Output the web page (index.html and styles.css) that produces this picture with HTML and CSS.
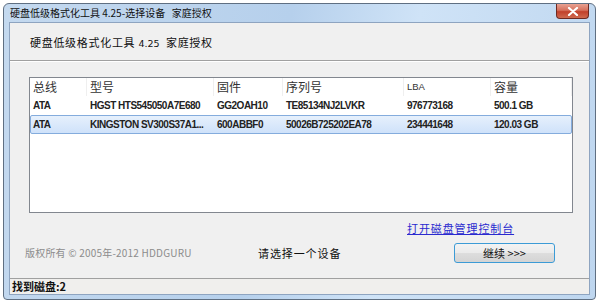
FILE: index.html
```html
<!DOCTYPE html>
<html lang="zh-CN">
<head>
    <meta charset="UTF-8">
    <title>硬盘低级格式化工具 4.25-选择设备</title>
    <link rel="stylesheet" href="styles.css">
</head>
<body>
    <div class="window">
        <div class="titlebar">
            <span class="title">硬盘低级格式化工具 4.25-选择设备 &nbsp; 家庭授权</span>
            <button class="close-btn">
                <svg width="12" height="9" viewBox="0 0 12 9">
                    <path d="M2 1 L10 8 M10 1 L2 8" stroke="#fff" stroke-width="2.2" stroke-linecap="round"/>
                </svg>
            </button>
        </div>
        <div class="client">
            <header class="app-header">
                <h1>硬盘低级格式化工具 <span class="ver">4.25</span> &nbsp;家庭授权</h1>
            </header>
            <main class="content">
                <div class="listbox">
                    <div class="list-head">
                        <div>总线</div>
                        <div>型号</div>
                        <div>固件</div>
                        <div>序列号</div>
                        <div class="lba">LBA</div>
                        <div>容量</div>
                    </div>
                    <div class="list-row">
                        <div>ATA</div>
                        <div>HGST HTS545050A7E680</div>
                        <div>GG2OAH10</div>
                        <div>TE85134NJ2LVKR</div>
                        <div>976773168</div>
                        <div>500.1 GB</div>
                    </div>
                    <div class="list-row selected">
                        <div>ATA</div>
                        <div>KINGSTON SV300S37A1...</div>
                        <div>600ABBF0</div>
                        <div>50026B725202EA78</div>
                        <div>234441648</div>
                        <div>120.03 GB</div>
                    </div>
                </div>
                <div class="link-row">
                    <a href="#" class="console-link">打开磁盘管理控制台</a>
                </div>
                <div class="bottom-row">
                    <span class="copyright">版权所有 © 2005年-2012 HDDGURU</span>
                    <span class="hint">请选择一个设备</span>
                    <button class="continue-btn">继续 &gt;&gt;&gt;</button>
                </div>
            </main>
            <footer class="statusbar">找到磁盘:2</footer>
        </div>
    </div>
</body>
</html>
```
FILE: styles.css
```css
body {
    margin: 0;
    padding: 3px 4px 4px 3px;
    background-color: #fff;
    font-family: "Noto Sans CJK SC", "DejaVu Sans", sans-serif;
}
.window {
    height: 297px;
    box-sizing: border-box;
    border: 1px solid #5f6f82;
    border-radius: 6px 6px 4px 4px;
    background: linear-gradient(100deg, #c4d9ef 0%, #b6d0ec 45%, #cfe3f7 65%, #bed6ef 100%);
    padding: 0 5px 4px 5px;
    display: flex;
    flex-direction: column;
}
.titlebar {
    height: 18px;
    display: flex;
    align-items: flex-start;
    justify-content: space-between;
}
.title {
    font-size: 10px;
    line-height: 18px;
    color: #111;
    padding-left: 1px;
}
.close-btn {
    width: 33px;
    height: 15px;
    margin-right: 1px;
    padding: 0;
    border: 1px solid #6d2a22;
    border-top: none;
    border-radius: 0 0 4px 4px;
    background: linear-gradient(#e8a192 0%, #d5705c 45%, #c1402b 55%, #cf6a4f 100%);
    display: flex;
    align-items: center;
    justify-content: center;
}
.client {
    flex: 1;
    border: 1px solid #8ea4c0;
    background-color: #f0f0f0;
    display: flex;
    flex-direction: column;
}
.app-header {
    height: 37px;
    border-bottom: 1px solid #a0a0a0;
    box-shadow: 0 1px 0 #fff;
    display: flex;
    align-items: center;
    padding-left: 20px;
}
.app-header h1 {
    margin: 0;
    font-size: 11px;
    font-weight: normal;
    letter-spacing: 0.7px;
    color: #111;
}
.ver {
    font-family: "DejaVu Sans", sans-serif;
    font-size: 9.5px;
    letter-spacing: 0;
}
.content {
    flex: 1;
    padding: 16px 16px 0 19px;
}
.listbox {
    width: 544px;
    height: 136px;
    box-sizing: border-box;
    border: 1px solid #82878f;
    background-color: #fff;
}
.list-head, .list-row {
    display: grid;
    grid-template-columns: 57px 127px 69px 121px 87px 1fr;
}
.list-head {
    height: 18px;
    align-items: center;
    font-size: 12px;
    color: #333;
}
.list-head div {
    padding-left: 3px;
    border-right: 1px solid #efefef;
    line-height: 18px;
}
.list-head .lba {
    font-family: "Liberation Sans", sans-serif;
    font-size: 9.5px;
}
.list-row {
    height: 17px;
    align-items: center;
    font-family: "Liberation Sans", sans-serif;
    font-size: 10px;
    font-weight: bold;
    letter-spacing: -0.5px;
    color: #222;
    border: 1px solid transparent;
}
.list-row div {
    padding-left: 2px;
    white-space: nowrap;
    overflow: hidden;
}
.list-row.selected {
    background: linear-gradient(#e6f0fc, #cfe2fa);
    border-color: #84acdd;
    border-radius: 2px;
}
.link-row {
    height: 29px;
    display: flex;
    align-items: center;
    padding-left: 378px;
}
.console-link {
    font-size: 11px;
    letter-spacing: 0.9px;
    color: #2a2acf;
}
.bottom-row {
    display: flex;
    align-items: center;
    height: 21px;
    margin-left: -4px;
}
.copyright {
    width: 233px;
    font-size: 10px;
    letter-spacing: 0.2px;
    color: #8c8c8c;
}
.hint {
    width: 196px;
    font-size: 11px;
    letter-spacing: 0.9px;
    color: #111;
}
.continue-btn {
    width: 101px;
    height: 20px;
    border: 1px solid #3c9bd6;
    border-radius: 3px;
    background: linear-gradient(#f3f3f3 0%, #ebebeb 48%, #dddddd 52%, #d4d4d4 100%);
    font-family: "Noto Sans CJK SC", "DejaVu Sans", sans-serif;
    font-size: 11px;
    color: #111;
    padding: 0;
}
.statusbar {
    height: 15px;
    border-top: 1px solid #a0a0a0;
    background-color: #f0efed;
    font-size: 11px;
    font-weight: bold;
    line-height: 15px;
    padding-left: 2px;
    color: #111;
}
```
